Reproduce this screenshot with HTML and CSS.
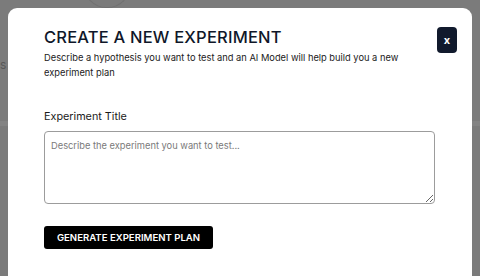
FILE: index.html
```html
<!DOCTYPE html>
<html>
<head>
    <meta charset="UTF-8" />
    <title>Create a new experiment</title>
    <meta name="viewport" content="width=device-width, initial-scale=1">
    <link rel="stylesheet" href="styles.css">
</head>
<body>

<div class="backdrop">
  <span class="ghost-letter">s</span>
  <div class="ghost-tab"></div>
  <div class="ghost-line ghost-left"></div>
  <div class="ghost-line ghost-right"></div>
</div>

<div class="modal">
  <button class="close" type="button">x</button>

  <header class="modal-head">
    <h1>CREATE A NEW EXPERIMENT</h1>
    <p>Describe a hypothesis you want to test and an AI Model will help build you a new experiment plan</p>
  </header>

  <form class="modal-form">
    <label for="title">Experiment Title</label>
    <textarea id="title" placeholder="Describe the experiment you want to test..."></textarea>
    <button class="generate" type="button">GENERATE EXPERIMENT PLAN</button>
  </form>
</div>

</body>
</html>
```

FILE: styles.css
```css
* {
  box-sizing: border-box;
}

html, body {
  margin: 0;
  height: 100%;
  overflow: hidden;
}

body {
  font-family: Inter, "Noto Sans", Arial, sans-serif;
  background-color: #7b7b7b;
  position: relative;
}

/* faint page content behind the overlay */
.backdrop {
  position: absolute;
  inset: 0;
}

.ghost-letter {
  position: absolute;
  left: 0;
  top: 57px;
  font-size: 12px;
  color: #585858;
}

.ghost-tab {
  position: absolute;
  left: 84px;
  top: -22px;
  width: 46px;
  height: 30px;
  border: 1px solid #707070;
  border-top: none;
  border-radius: 0 0 22px 22px;
}

.ghost-line {
  position: absolute;
  top: 121px;
  width: 8px;
  height: 5px;
  background-color: #838383;
}

.ghost-left {
  left: 0;
}

.ghost-right {
  right: 0;
}

/* the dialog */
.modal {
  position: relative;
  margin: 8px 8px 0;
  height: 300px;
  background-color: #fff;
  border-radius: 9px;
  padding: 19px 37px 0 36px;
  color: #0f1729;
}

.close {
  position: absolute;
  top: 19px;
  right: 15px;
  width: 20px;
  height: 26px;
  padding: 0;
  border: none;
  border-radius: 4px;
  background-color: #111a2d;
  color: #fff;
  font-family: inherit;
  font-size: 11px;
  font-weight: 700;
  line-height: 24px;
}

.modal-head h1 {
  margin: 0;
  font-size: 16.5px;
  font-weight: 500;
  letter-spacing: 0.2px;
  line-height: 20px;
}

.modal-head p {
  margin: 3px 0 0;
  width: 380px;
  font-size: 9.3px;
  letter-spacing: 0;
  line-height: 15px;
  color: #1b1b1b;
}

.modal-form {
  display: flex;
  flex-direction: column;
  align-items: flex-start;
  margin-top: 29px;
}

.modal-form label {
  font-size: 10.8px;
  font-weight: 400;
  color: #1b1b1b;
  line-height: 16px;
}

.modal-form textarea {
  margin-top: 6px;
  width: 391px;
  height: 73px;
  border: 1px solid #9c9c9c;
  border-radius: 4px;
  padding: 8px 6px;
  font-family: inherit;
  font-size: 9.3px;
  resize: vertical;
}

.modal-form textarea::placeholder {
  color: #7a7a7a;
}

.generate {
  margin-top: 22px;
  width: 169px;
  height: 23px;
  border: none;
  border-radius: 3px;
  background-color: #000;
  color: #fff;
  font-family: inherit;
  font-size: 9.6px;
  font-weight: 600;
  padding: 0;
}
```
